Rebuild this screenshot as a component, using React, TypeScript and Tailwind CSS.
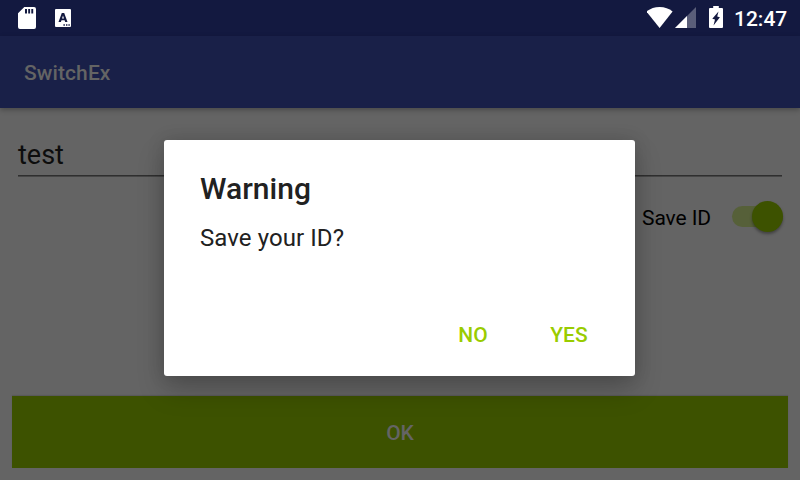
function StatusBar() {
  return (
    <header className="flex h-9 shrink-0 items-center bg-[#131940] text-white">
      <svg className="ml-[18px] h-9 w-[18px]" viewBox="0 0 18 36" fill="currentColor">
        <path fillRule="evenodd" d="M6.3 7H16a2 2 0 0 1 2 2v18a2 2 0 0 1-2 2H2a2 2 0 0 1-2-2V13.2zM7 9v4.6h2V9zM10.2 9v4.6h1.9V9zM13.3 9v4.6h1.9V9z" />
      </svg>
      <svg className="ml-[19px] h-9 w-4" viewBox="0 0 16 36" fill="currentColor">
        <path fillRule="evenodd" d="M1 9h14a1 1 0 0 1 1 1v16a1 1 0 0 1-1 1H1a1 1 0 0 1-1-1V10a1 1 0 0 1 1-1zM6.8 13L3.5 22h2.4l.6-1.8h3.1l.6 1.8h2.3L9.200 13zM8 15.500l1 3H7zM8.400 24.200v1.500h1.500v-1.500zM11 24.200v1.500h1.400v-1.500zM13.400 24.200v1.500h1.400v-1.500z" />
      </svg>
      <svg className="ml-auto h-9 w-[26px]" viewBox="0 0 26 36" fill="currentColor">
        <path d="M-.5 11.500C3 8.700 7.500 7 12.600 7s9.500 1.700 13 4.500L12.600 27.900z" />
      </svg>
      <svg className="ml-[2px] h-9 w-[21px]" viewBox="0 0 21 36" fill="currentColor">
        <path d="M0 28L21 7v21z" fillOpacity=".3" />
        <path d="M0 28L12 16v12z" />
      </svg>
      <svg className="ml-[13px] h-9 w-[14px]" viewBox="0 0 14 36" fill="currentColor">
        <path fillRule="evenodd" d="M4.200 6h5.600v2H13a1 1 0 0 1 1 1v18a1 1 0 0 1-1 1H1a1 1 0 0 1-1-1V9a1 1 0 0 1 1-1h3.200zM9.500 11.500L3.300 18.800L6 19.600L4.500 25.500L10.900 17.300L8.200 16.500z" />
      </svg>
      <span className="mr-[11px] ml-[11px] w-[55px] pt-[2px] text-[21px] leading-[34px] font-medium whitespace-nowrap">12:47</span>
    </header>
  );
}

function SaveSwitch() {
  return (
    <div className="mr-[17px] flex h-[40px] items-center justify-end">
      <span className="mr-[21px] pt-1 text-[21px] leading-6 tracking-[-0.1px] text-black">Save ID</span>
      <span className="flex h-[21px] w-[51px] items-center justify-end rounded-full bg-[#566039]">
        <span className="h-[31px] w-[31px] shrink-0 rounded-full bg-[#3d5200] shadow-[0_2px_3px_rgba(0,0,0,0.35)]" />
      </span>
    </div>
  );
}

function WarningDialog() {
  return (
    <section
      role="dialog"
      className="absolute top-[140px] left-[164px] flex h-[236px] w-[471px] flex-col rounded-[3px] bg-white pt-[30px] pr-[29px] pb-[22px] pl-9 text-[#212121] shadow-[0_14px_28px_rgba(0,0,0,0.2),0_0_18px_rgba(0,0,0,0.14)]"
    >
      <h2 className="text-[30px] leading-[38px] font-medium tracking-[0.05px]">Warning</h2>
      <p className="mt-[15px] text-2xl leading-[30px] tracking-[0.08px]">Save your ID?</p>
      <div className="mt-auto flex justify-end gap-[26px] text-[21px] leading-[38px] font-medium text-[#99cc00]">
        <button className="w-[66px]">NO</button>
        <button className="w-[74px]">YES</button>
      </div>
    </section>
  );
}

export default function App() {
  return (
    <div className="relative flex h-[480px] w-[800px] flex-col overflow-hidden bg-[#646464] font-[Roboto,sans-serif]">
      <StatusBar />
      <div className="flex h-[72px] shrink-0 items-center bg-[#192048] pt-[3px] pl-6 text-[21px] font-medium tracking-[0.1px] text-[#646464] shadow-[0_2px_5px_rgba(0,0,0,0.28)]">
        SwitchEx
      </div>
      <main className="flex flex-1 flex-col">
        <div className="mx-[18px] mt-6 h-11 border-b border-[#2f2f2f] text-[27px] leading-[46px] text-[#0d0d0d] shadow-[0_1px_0_#464646]">test</div>
        <div className="mt-5">
          <SaveSwitch />
        </div>
        <button className="mx-3 mt-auto mb-3 h-[72px] bg-[#3d5200] pt-[3px] text-[21px] font-medium text-[#646464] shadow-[0_-1px_1px_rgba(0,0,0,0.1)]">OK</button>
      </main>
      <WarningDialog />
    </div>
  );
}
